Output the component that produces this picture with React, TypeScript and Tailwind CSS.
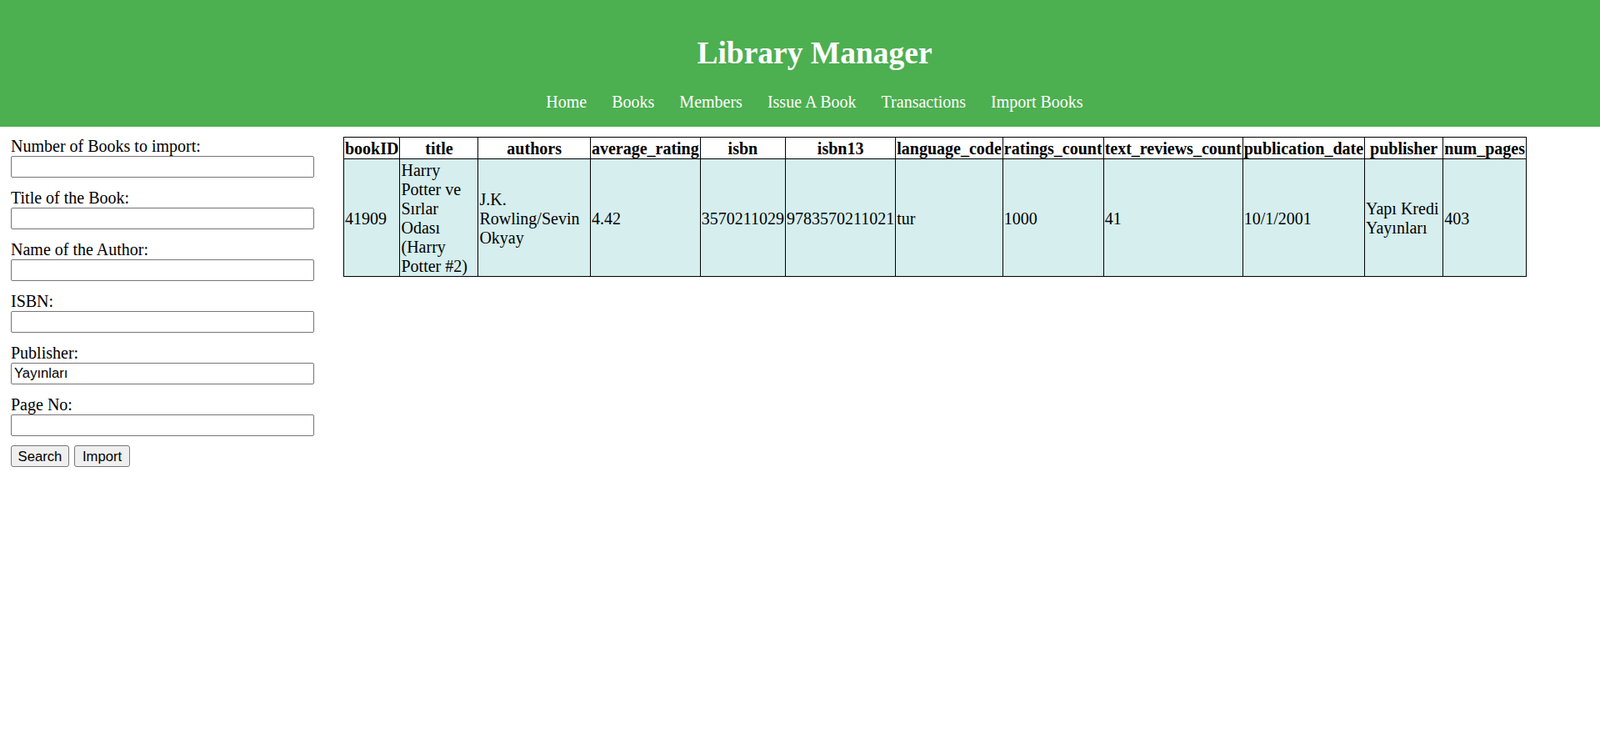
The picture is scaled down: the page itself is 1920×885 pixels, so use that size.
import React from 'react';

const navLinks = ['Home', 'Books', 'Members', 'Issue A Book', 'Transactions', 'Import Books'];

const fields = [
  { label: 'Number of Books to import:', value: '' },
  { label: 'Title of the Book:', value: '' },
  { label: 'Name of the Author:', value: '' },
  { label: 'ISBN:', value: '' },
  { label: 'Publisher:', value: 'Yayınları' },
  { label: 'Page No:', value: '' },
];

const columns = [
  'bookID',
  'title',
  'authors',
  'average_rating',
  'isbn',
  'isbn13',
  'language_code',
  'ratings_count',
  'text_reviews_count',
  'publication_date',
  'publisher',
  'num_pages',
];

const books = [
  {
    bookID: '41909',
    title: 'Harry Potter ve Sırlar Odası (Harry Potter #2)',
    authors: 'J.K. Rowling/Sevin Okyay',
    average_rating: '4.42',
    isbn: '3570211029',
    isbn13: '9783570211021',
    language_code: 'tur',
    ratings_count: '1000',
    text_reviews_count: '41',
    publication_date: '10/1/2001',
    publisher: 'Yapı Kredi Yayınları',
    num_pages: '403',
  },
];

const App: React.FC = () => {
  return (
    <div className="min-h-screen bg-white font-['Liberation_Serif','Times_New_Roman',serif] text-[20px] text-black">
      <header className="bg-[#4CAF50] pl-[35px] pt-[43px] pb-[18px] text-center text-white">
        <h1 className="text-[37.5px] font-bold leading-[41px]">Library Manager</h1>
        <nav className="mt-[27px] flex justify-center gap-[30px] leading-[23px]">
          {navLinks.map((link) => (
            <a key={link} href="#" className="text-white no-underline">
              {link}
            </a>
          ))}
        </nav>
      </header>

      <div className="flex items-start">
        <div className="w-[412px] shrink-0 pl-[13px] pt-[10px]">
          {fields.map((field) => (
            <div key={field.label} className="mb-[11px]">
              <label className="block pt-[2px] leading-[23px]">{field.label}</label>
              <input
                type="text"
                defaultValue={field.value}
                className="block h-[26px] w-[364px] rounded-[2px] border border-[#767676] bg-white px-[3px] font-['Liberation_Sans',Arial,sans-serif] text-[16.67px] text-black outline-none"
              />
            </div>
          ))}
          <div className="mt-[2px] flex gap-[6px] font-['Liberation_Sans',Arial,sans-serif] text-[16.67px]">
            <button className="h-[26px] w-[70px] rounded-[3px] border border-[#767676] bg-[#efefef] text-center text-black">
              Search
            </button>
            <button className="h-[26px] w-[67px] rounded-[3px] border border-[#767676] bg-[#efefef] text-center text-black">
              Import
            </button>
          </div>
        </div>

        <div className="pt-[12px]">
          <table className="w-[1420px] border-collapse border border-black">
            <thead>
              <tr className="bg-white">
                {columns.map((col) => (
                  <th key={col} className="border border-black px-px pt-[2px] pb-0 text-center font-bold leading-[23px]">
                    {col}
                  </th>
                ))}
              </tr>
            </thead>
            <tbody>
              {books.map((book) => (
                <tr key={book.bookID} className="bg-[#D6EEEE]">
                  {columns.map((col) => (
                    <td key={col} className="border border-black px-px pt-[2px] pb-0 text-left align-middle leading-[23px]">
                      {book[col as keyof typeof book]}
                    </td>
                  ))}
                </tr>
              ))}
            </tbody>
          </table>
        </div>
      </div>
    </div>
  );
};

export default App;
